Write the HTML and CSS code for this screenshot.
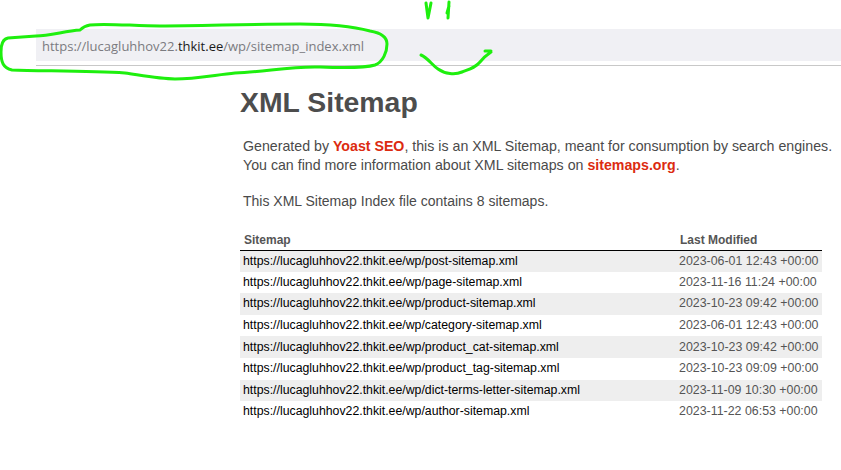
FILE: index.html
```html
<!DOCTYPE html>
<html lang="en">
<head>
<meta charset="utf-8">
<title>XML Sitemap</title>
<link rel="stylesheet" href="styles.css">
</head>
<body>
<header class="browser">
  <div class="address"><span class="dim">https://lucagluhhov22.</span><span class="host">thkit.ee</span><span class="dim">/wp/sitemap_index.xml</span></div>
</header>
<main class="content">
  <h1 class="title">XML Sitemap</h1>
  <div class="intro">
    <p class="para">Generated by <a class="link">Yoast SEO</a>, this is an XML Sitemap, meant for consumption by search engines.<br>You can find more information about XML sitemaps on <a class="link">sitemaps.org</a>.</p>
    <p class="para count">This XML Sitemap Index file contains 8 sitemaps.</p>
  </div>
  <table class="sitemaps">
    <thead>
      <tr><th class="col-url">Sitemap</th><th class="col-date">Last Modified</th></tr>
    </thead>
    <tbody>
      <tr><td>https://lucagluhhov22.thkit.ee/wp/post-sitemap.xml</td><td>2023-06-01 12:43 +00:00</td></tr>
      <tr><td>https://lucagluhhov22.thkit.ee/wp/page-sitemap.xml</td><td>2023-11-16 11:24 +00:00</td></tr>
      <tr><td>https://lucagluhhov22.thkit.ee/wp/product-sitemap.xml</td><td>2023-10-23 09:42 +00:00</td></tr>
      <tr><td>https://lucagluhhov22.thkit.ee/wp/category-sitemap.xml</td><td>2023-06-01 12:43 +00:00</td></tr>
      <tr><td>https://lucagluhhov22.thkit.ee/wp/product_cat-sitemap.xml</td><td>2023-10-23 09:42 +00:00</td></tr>
      <tr><td>https://lucagluhhov22.thkit.ee/wp/product_tag-sitemap.xml</td><td>2023-10-23 09:09 +00:00</td></tr>
      <tr><td>https://lucagluhhov22.thkit.ee/wp/dict-terms-letter-sitemap.xml</td><td>2023-11-09 10:30 +00:00</td></tr>
      <tr><td>https://lucagluhhov22.thkit.ee/wp/author-sitemap.xml</td><td>2023-11-22 06:53 +00:00</td></tr>
    </tbody>
  </table>
</main>
<svg class="scribble" width="841" height="470" viewBox="0 0 841 470" aria-hidden="true">
  <path d="M80 30C65 31 50 36 36 36L8 38C2 39 1 45 1 52C1 62 3 68 12 70C40 71 90 71 125 73C145 76 160 79 175 79C195 79 215 75 235 73C265 72 290 66 320 67C345 68 365 68 375 65C383 62 387 52 387 44C387 38 382 33 370 31C355 27 335 24 300 24C250 24 200 26 160 26C135 26 105 23 90 25C84 26 82 28 80 30"/>
  <path d="M426 3L428 18L431 3"/>
  <path d="M449 2L448 18M449 6L447 13"/>
  <path d="M421 55C428 58 432 65 438 69C445 74 455 75 462 72C470 69 475 68 480 62C484 57 488 54 491 52M485 51L491 51"/>
</svg>
</body>
</html>
```
FILE: styles.css
```css
html, body {
  margin: 0;
  padding: 0;
  background: #fff;
}
body {
  width: 841px;
  height: 470px;
  overflow: hidden;
  position: relative;
  font-family: "Liberation Sans", Arial, sans-serif;
  color: #4a4a4a;
}
.browser {
  margin: 29px 0 0 36px;
  height: 36px;
  border-bottom: 1px solid #c8c8c8;
  box-sizing: content-box;
}
.address {
  height: 32px;
  line-height: 35px;
  padding-left: 6px;
  background: #f0f0f4;
  font-family: "Open Sans", sans-serif;
  font-size: 13px;
  white-space: nowrap;
}
.dim { color: #7b7b80; }
.host { color: #1a1a1a; }
.content {
  margin-left: 240px;
  width: 582px;
}
.title {
  margin: 20px 0 0;
  font-size: 28.4px;
  line-height: 32px;
  font-weight: 700;
  color: #4d4d4d;
}
.intro {
  margin: 19px -20px 0 3px;
}
.para {
  margin: 0;
  font-size: 14.2px;
  line-height: 19px;
  white-space: nowrap;
}
.para.count {
  margin-top: 17px;
  font-size: 14px;
}
.link {
  color: #dc2b10;
  font-weight: 700;
}
.sitemaps {
  margin-top: 20px;
  width: 582px;
  border-collapse: collapse;
  table-layout: fixed;
  font-size: 12.3px;
}
.sitemaps th {
  box-sizing: border-box;
  height: 19px;
  padding: 0 0 1px 4px;
  text-align: left;
  font-size: 12px;
  font-weight: 700;
  color: #555;
  border-bottom: 1px solid #000;
}
.col-url { width: 436px; }
.col-date { width: 146px; }
.sitemaps td {
  box-sizing: border-box;
  height: 21.6px;
  padding: 0 0 1px 3px;
  color: #333;
  white-space: nowrap;
}
.sitemaps td:first-child { color: #000; }
.sitemaps td:last-child { color: #555; font-size: 12.4px; }
.sitemaps tbody tr:nth-child(odd) { background: #eee; }
.scribble {
  position: absolute;
  left: 0;
  top: 0;
  pointer-events: none;
}
.scribble path {
  fill: none;
  stroke: #1eef0e;
  stroke-width: 3;
  stroke-linecap: round;
  stroke-linejoin: round;
}
```
